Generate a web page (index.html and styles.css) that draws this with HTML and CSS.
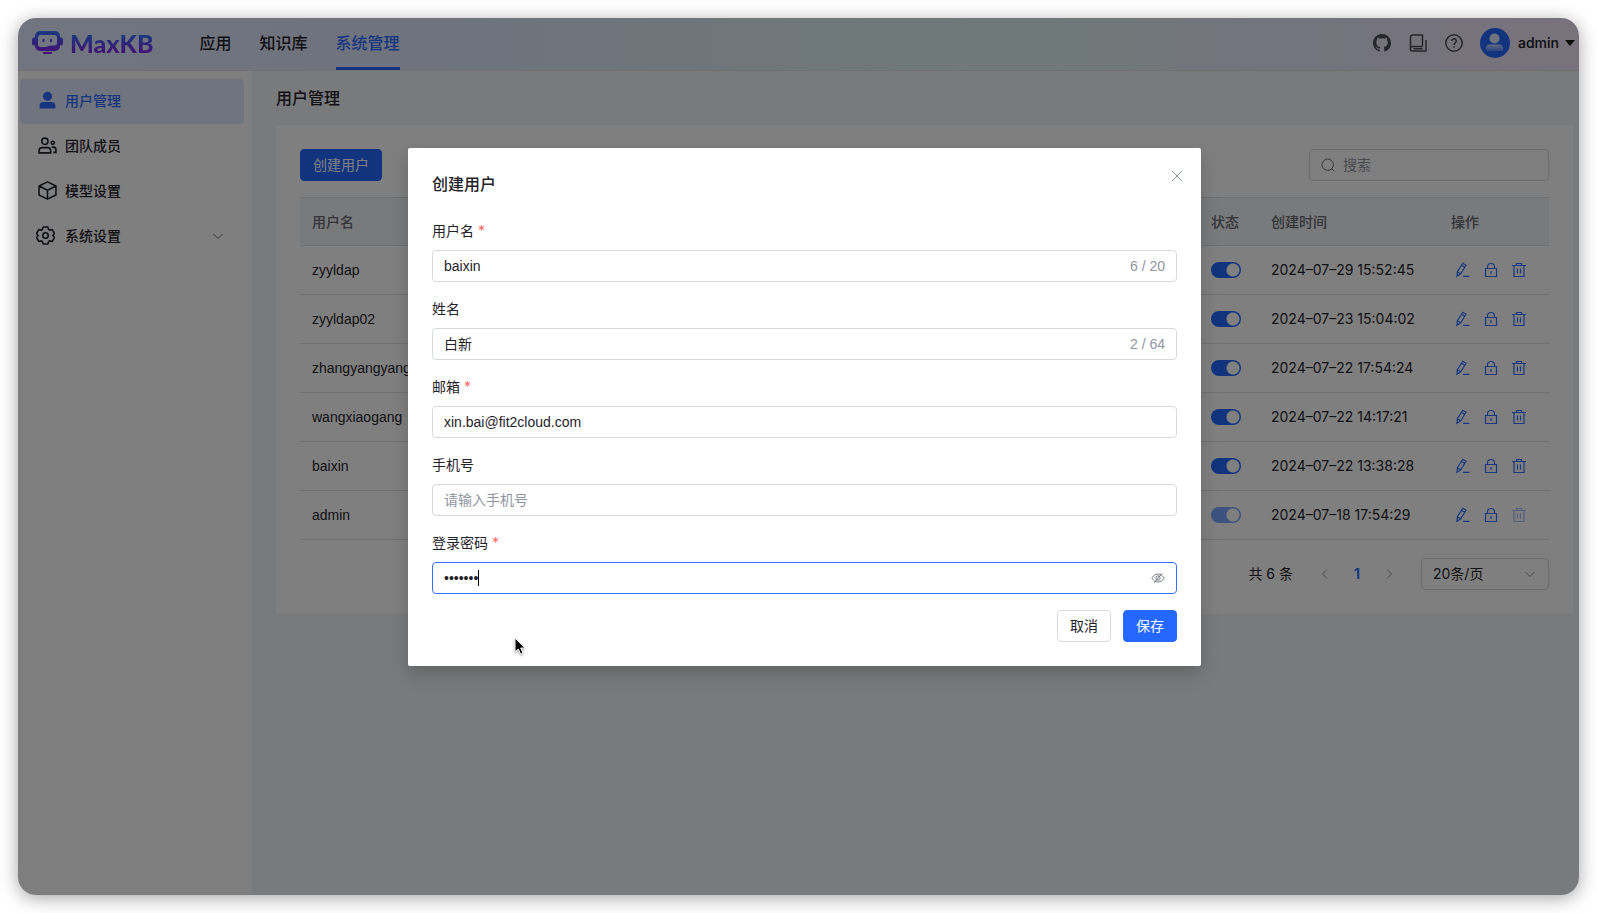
FILE: index.html
```html
<!DOCTYPE html>
<html lang="zh-CN">
<head>
<meta charset="utf-8">
<title>MaxKB</title>
<link rel="stylesheet" href="styles.css">
</head>
<body>
<svg class="sprite" aria-hidden="true">
  <symbol id="edit" viewBox="0 0 16 16"><path d="M2 14.200l.3-4.400L7.800 1.200l3.200 2-5.300 8.500zM6.500 3.300l3.200 2M2.300 9.800l3.300 2M8 14.300h6.500" fill="none" stroke="currentColor" stroke-width="1.200"/></symbol>
  <symbol id="lock" viewBox="0 0 16 16"><path d="M2.500 6.500h11v8h-11zM4.500 6.500V5a3.500 3.500 0 0 1 7 0v1.500M8 9v3" fill="none" stroke="currentColor" stroke-width="1.200"/></symbol>
  <symbol id="trash" viewBox="0 0 16 16"><path d="M1 3.500h14M3 3.500v11h10v-11M5.500 3.500v-2h5v2M6.500 6.500v5M9.500 6.500v5" fill="none" stroke="currentColor" stroke-width="1.200"/></symbol>
  <symbol id="down" viewBox="0 0 12 12"><path d="M1.500 4L6 8.500 10.500 4" fill="none" stroke="currentColor"/></symbol>
</svg>
<div class="window">
  <header class="header">
    <a class="brand" href="#" aria-label="MaxKB">
      <svg class="robot" viewBox="0 0 31 24">
        <defs><linearGradient id="lg" x1="0" y1="0" x2="0" y2="1"><stop offset="0" stop-color="#3370ff"/><stop offset="1" stop-color="#8a1fe8"/></linearGradient></defs>
        <path fill="url(#lg)" fill-rule="evenodd" d="M8 0h15a5 5 0 0 1 5 5v1.500h1a2 2 0 0 1 2 2v4a2 2 0 0 1-2 2h-1V15a5 5 0 0 1-5 5H8a5 5 0 0 1-5-5v-.5H2a2 2 0 0 1-2-2v-4a2 2 0 0 1 2-2h1V5a5 5 0 0 1 5-5zM8.500 4A2.500 2.500 0 0 0 6 6.500v7A2.500 2.500 0 0 0 8.500 16h5l5-1.500h4a2.500 2.500 0 0 0 2.500-2.500V6.500A2.500 2.500 0 0 0 22.500 4zM10.500 8h2v3h-2zM18 8h2v3h-2zM11 21h9v1a1 1 0 0 1-1 1h-7a1 1 0 0 1-1-1z"/>
      </svg>
      <span class="wordmark">MaxKB</span>
    </a>
    <nav class="topnav">
      <a href="#">应用</a><a href="#">知识库</a><a class="active" href="#">系统管理</a>
    </nav>
    <div class="tools">
      <a href="#" aria-label="GitHub"><svg viewBox="0 0 16 16"><path fill="currentColor" d="M8 0C3.580 0 0 3.580 0 8c0 3.540 2.290 6.530 5.470 7.590.4.070.55-.17.55-.38 0-.19-.01-.82-.01-1.490-2.010.37-2.530-.49-2.690-.94-.09-.23-.48-.94-.82-1.130-.28-.15-.68-.52-.01-.53.63-.01 1.080.58 1.230.82.720 1.210 1.870.87 2.330.66.070-.52.280-.87.510-1.070-1.780-.2-3.640-.89-3.640-3.950 0-.87.310-1.590.82-2.150-.08-.2-.36-1.020.08-2.120 0 0 .67-.21 2.200.82a7.600 7.600 0 0 1 4 0c1.530-1.040 2.200-.82 2.200-.82.440 1.100.160 1.920.080 2.120.510.560.820 1.270.820 2.150 0 3.070-1.870 3.750-3.650 3.950.290.250.540.730.540 1.480 0 1.070-.01 1.930-.01 2.200 0 .210.150.460.550.380A8 8 0 0 0 16 8c0-4.420-3.580-8-8-8z"/></svg></a>
      <a href="#" aria-label="文档"><svg viewBox="0 0 18 18" fill="none" stroke="currentColor" stroke-width="1.500"><path d="M13.500 12.500V1H3.500A2 2 0 0 0 1.500 3v12M13.500 12.500H3.500a2.200 2.200 0 0 0 0 4.500H17V6M4.500 14.800h9"/></svg></a>
      <a href="#" aria-label="帮助"><svg viewBox="0 0 18 18" fill="none" stroke="currentColor" stroke-width="1.500"><circle cx="9" cy="9" r="8.200"/><path d="M6.700 7a2.300 2.300 0 1 1 3.600 1.900C9.300 9.600 9 9.900 9 11M9 12.300v1.400"/></svg></a>
    </div>
    <button class="user" type="button">
      <svg class="avatar" viewBox="0 0 30 30"><defs><linearGradient id="ag" x1="0" y1="0" x2="0" y2="1"><stop offset="0" stop-color="#fff" stop-opacity=".75"/><stop offset="1" stop-color="#fff" stop-opacity=".2"/></linearGradient></defs><circle cx="15" cy="15" r="15" fill="#2468ff"/><circle cx="14.500" cy="10.500" r="5" fill="#dfe8ff"/><path d="M6 23V20.500a4 4 0 0 1 4-4h9a4 4 0 0 1 4 4V23z" fill="url(#ag)"/></svg>
      <span>admin</span><i class="caret"></i>
    </button>
  </header>
  <div class="body">
    <aside class="sidebar">
      <a class="item active" href="#"><svg viewBox="0 0 18 18"><circle cx="9" cy="5" r="4.300" fill="currentColor"/><path d="M1.500 16.500V14a3.500 3.500 0 0 1 3.500-3.500h8a3.500 3.500 0 0 1 3.500 3.500v2.500z" fill="currentColor"/></svg><span>用户管理</span></a>
      <a class="item" href="#"><svg viewBox="0 0 18 18" fill="none" stroke="currentColor" stroke-width="1.500"><circle cx="6.500" cy="5" r="3"/><circle cx="14" cy="6.500" r="1.500"/><path d="M1 16v-2a3 3 0 0 1 3-3h5a3 3 0 0 1 3 3v2zM13 10.500h1.500A2.500 2.500 0 0 1 17 13v2.500h-2.500"/></svg><span>团队成员</span></a>
      <a class="item" href="#"><svg viewBox="0 0 18 18" fill="none" stroke="currentColor" stroke-width="1.500" stroke-linejoin="round"><path d="M9 .8l8 4v8.400l-8 4-8-4V4.800zM1 4.800l8 4 8-4M9 8.800v8.400"/></svg><span>模型设置</span></a>
      <a class="item gear" href="#"><svg viewBox="0 0 18 18" fill="none" stroke="currentColor" stroke-width="1.500" stroke-linejoin="round"><path d="M6.800 1h4.400l.8 2.300 1 .6 2.400-.5 2.100 3.700L16 9l1.500 1.900-2.100 3.700-2.400-.5-1 .6-.8 2.300H6.800L6 14.700l-1-.6-2.400.5-2.100-3.700L2 9 .5 7.100l2.100-3.700 2.400.5 1-.6z"/><circle cx="9" cy="9" r="2.600"/></svg><span>系统设置</span><svg class="chev"><use href="#down"/></svg></a>
    </aside>
    <main class="main">
      <h1>用户管理</h1>
      <section class="card">
        <div class="toolbar">
          <button class="btn primary" type="button">创建用户</button>
          <label class="search"><svg viewBox="0 0 14 14" fill="none" stroke="currentColor"><circle cx="6.700" cy="6.700" r="5.700"/><path d="M10.800 10.800l2 2"/></svg><input type="text" placeholder="搜索" aria-label="搜索"></label>
        </div>
        <table class="table">
          <colgroup><col><col class="c-state"><col class="c-time"><col class="c-op"></colgroup>
          <thead><tr><th>用户名</th><th>状态</th><th>创建时间</th><th>操作</th></tr></thead>
          <tbody id="rows"></tbody>
        </table>
        <div class="pager">
          <span>共 6 条</span>
          <div class="pages"><button type="button" aria-label="上一页"><svg class="prev"><use href="#down"/></svg></button><button class="current" type="button">1</button><button type="button" aria-label="下一页"><svg class="next"><use href="#down"/></svg></button></div>
          <div class="size"><select aria-label="每页条数"><option>20条/页</option></select><svg><use href="#down"/></svg></div>
        </div>
      </section>
    </main>
  </div>
  <div class="overlay">
    <form class="dialog" role="dialog" aria-labelledby="dlg-title">
      <button class="close" type="button" aria-label="关闭"><svg viewBox="0 0 12 12"><path d="M1 1l10 10M11 1L1 11" fill="none" stroke="currentColor"/></svg></button>
      <h2 id="dlg-title">创建用户</h2>
      <div class="field"><label for="f1">用户名 <em>*</em></label><div class="box"><input id="f1" type="text" value="baixin"><span class="count">6 / 20</span></div></div>
      <div class="field"><label for="f2">姓名</label><div class="box"><input id="f2" type="text" value="白新"><span class="count">2 / 64</span></div></div>
      <div class="field"><label for="f3">邮箱 <em>*</em></label><div class="box"><input id="f3" type="text" value="xin.bai@fit2cloud.com"></div></div>
      <div class="field"><label for="f4">手机号</label><div class="box"><input id="f4" type="text" placeholder="请输入手机号"></div></div>
      <div class="field"><label for="f5">登录密码 <em>*</em></label><div class="box focus"><div class="pw"><input id="f5" type="password" value="1234567"><i class="ibeam"></i></div><button class="eye" type="button" aria-label="显示密码"><svg viewBox="0 0 16 16" fill="none" stroke="currentColor"><path d="M1 8c1.800-3 4-4.500 7-4.500S13.200 5 15 8c-1.800 3-4 4.500-7 4.500S2.800 11 1 8zM12.800 2.500L3.500 13.500"/><circle cx="8" cy="8" r="2.500"/></svg></button></div></div>
      <div class="actions"><button class="btn" type="button">取消</button><button class="btn primary" type="button">保存</button></div>
      <svg class="pointer" viewBox="0 0 12 18"><path d="M1 1v14l3.300-3 2.400 5.200 2.300-1L6.700 11H11z" fill="#000" stroke="#fff"/></svg>
    </form>
  </div>
</div>
<script src="app.js"></script>
</body>
</html>
```
FILE: styles.css
```css
* { box-sizing: border-box; }
body { margin: 0; height: 100vh; padding: 18px; background: #fff; color: #1f2329; font: 14px/22px Inter, "Noto Sans CJK SC", sans-serif; }
button, input, select { font: inherit; color: inherit; }
a { color: inherit; text-decoration: none; }
svg { display: block; flex: none; }
.sprite { position: absolute; width: 0; height: 0; }
.window { position: relative; height: 100%; border-radius: 18px; box-shadow: 0 3px 18px rgba(0,0,0,.36); overflow: hidden; display: flex; flex-direction: column; background: #f3f4f8; }

.header { display: flex; align-items: center; height: 53px; padding: 0 4px 2px 14px; border-bottom: 1px solid #dee0e3; background: linear-gradient(90deg, #e2ebff 0%, #dde6fc 24%, #def5f0 65%, #e6e9fb 79%, #efe5f8 100%); }
.brand { display: flex; align-items: center; gap: 7px; }
.robot { width: 31px; height: 24px; }
.wordmark { font: 900 25px/28px Lato, sans-serif; background: linear-gradient(#3370ff 20%, #8a1fe8 90%); background-clip: text; color: transparent; }
.topnav { display: flex; align-self: stretch; gap: 28px; margin: 0 0 -2px 46px; font-size: 16px; font-weight: 500; }
.topnav a { display: flex; align-items: center; border-bottom: 3px solid transparent; }
.topnav .active { color: #2f6bff; border-color: #2468ff; }
.tools { display: flex; gap: 18px; margin-left: auto; color: #4a4d57; }
.tools svg { width: 18px; height: 18px; }
.user { display: flex; align-items: center; margin-left: 17px; padding: 0; border: 0; background: none; color: #111; font-weight: 500; }
.avatar { width: 30px; height: 30px; margin-right: 8px; }
.caret { margin-left: 6px; border: 5px solid transparent; border-top: 6px solid #111; border-bottom: 0; }

.body { flex: 1; display: flex; min-height: 0; }
.sidebar { width: 234px; padding: 8px 8px 8px 2px; background: #fff; font-weight: 500; }
.item { display: flex; align-items: center; gap: 8px; height: 45px; padding: 0 20px 2px 18px; border-radius: 4px; }
.item svg { width: 19px; height: 19px; }
.item.gear { padding-left: 16px; gap: 10px; }
.item .chev { width: 12px; height: 12px; margin-left: auto; color: #646a73; }
.item.active { background: #e0e9ff; color: #2f6bff; }
.main { flex: 1; min-width: 0; padding: 15px 6px 0 24px; }
h1, h2 { margin: 0; font-size: 16px; line-height: 24px; font-weight: 500; }
.card { margin-top: 15px; padding: 24px; background: #fff; }
.toolbar { display: flex; justify-content: space-between; margin-bottom: 16px; }
.btn { height: 32px; padding: 0 12px; border: 1px solid #d6d9de; border-radius: 4px; background: #fff; line-height: 22px; }
.btn.primary { border-color: #2468ff; background: #2468ff; color: #fff; }
.search { display: flex; align-items: center; gap: 8px; width: 240px; height: 32px; padding: 0 11px; border: 1px solid #d6d9de; border-radius: 4px; color: #646a73; }
.search svg { width: 14px; height: 14px; }
input { flex: 1; min-width: 0; width: 100%; padding: 0; border: 0; outline: 0; background: none; font-family: "Liberation Sans", "Noto Sans CJK SC", sans-serif; }
input::placeholder { color: #8f959e; opacity: 1; }

.table { width: 100%; table-layout: fixed; border-collapse: collapse; }
.c-state { width: 60px; }
.c-time { width: 180px; }
.c-op { width: 110px; }
.table th { height: 48px; padding: 0 12px; border: solid #dee0e3; border-width: 1px 0; background: #f2f4f8; color: #646a73; font-weight: 500; text-align: left; }
.table td { height: 49px; padding: 0 12px; border-bottom: 1px solid #dee0e3; white-space: nowrap; }
.table .name { font-family: "Liberation Sans", sans-serif; }
.switch { display: block; appearance: none; flex: none; width: 30px; height: 16px; margin: 0; border-radius: 8px; background: radial-gradient(circle at 22px 8px, #fff 6px, transparent 7px) #2468ff; }
.switch:disabled { opacity: .6; }
.ops { display: flex; gap: 12px; padding-left: 4px; }
.ops button { padding: 0; border: 0; background: none; color: #3370ff; }
.ops button:disabled { opacity: .45; }
.ops svg { width: 16px; height: 16px; }
.pager { display: flex; align-items: center; justify-content: flex-end; margin-top: 18px; }
.pages { display: flex; margin: 0 16px; }
.pages button { display: flex; align-items: center; justify-content: center; width: 32px; height: 32px; padding: 0; border: 0; background: none; color: #8f959e; }
.pages .current { color: #3370ff; font-weight: 700; }
.pages svg { width: 12px; height: 12px; }
.prev { transform: rotate(90deg); }
.next { transform: rotate(-90deg); }
.size { display: flex; align-items: center; width: 128px; height: 32px; padding: 0 12px 0 11px; border: 1px solid #d6d9de; border-radius: 4px; color: #8f959e; }
.size select { flex: 1; appearance: none; padding: 0; border: 0; background: none; color: #1f2329; }
.size svg { width: 12px; height: 12px; }

.overlay { position: absolute; inset: 0; padding: 130px 0 0 12px; background: rgba(0,0,0,.5); }
.dialog { position: relative; width: 793px; max-width: 100%; margin: 0 auto; padding: 24px; border-radius: 2px; background: #fff; box-shadow: 0 8px 18px rgba(0,0,0,.18); }
.close { position: absolute; top: 22px; right: 18px; padding: 0; border: 0; background: none; color: #8f959e; }
.close svg { width: 12px; height: 12px; }
h2 { margin-bottom: 24px; }
.field { margin-bottom: 16px; }
.field label { display: block; margin-bottom: 8px; }
em { color: #f76964; font-style: normal; }
.box { display: flex; align-items: center; height: 32px; padding: 0 11px; border: 1px solid #d6d9de; border-radius: 4px; }
.box.focus { border-color: #3370ff; }
.count { color: #8f959e; font-family: "Liberation Sans", sans-serif; }
.pw { position: relative; flex: 1; display: flex; }
.ibeam { position: absolute; left: 34px; top: 3px; width: 1px; height: 16px; background: #000; }
.eye { padding: 0; border: 0; background: none; color: #646a73; }
.eye svg { width: 14px; height: 14px; }
.actions { display: flex; justify-content: flex-end; gap: 12px; }
.pointer { position: absolute; left: 106px; top: 489px; width: 12px; height: 18px; filter: drop-shadow(0 1px 1px rgba(0,0,0,.4)); }
```
FILE: app.js
```js
const users = [
  ["zyyldap", "2024–07–29 15:52:45"],
  ["zyyldap02", "2024–07–23 15:04:02"],
  ["zhangyangyang", "2024–07–22 17:54:24"],
  ["wangxiaogang", "2024–07–22 14:17:21"],
  ["baixin", "2024–07–22 13:38:28"],
  ["admin", "2024–07–18 17:54:29"]
];
const action = (icon, label, off) =>
  `<button type="button" aria-label="${label}" ${off}><svg><use href="#${icon}"/></svg></button>`;
document.getElementById("rows").innerHTML = users.map(([name, time]) => {
  const off = name === "admin" ? "disabled" : "";
  return `<tr><td class="name">${name}</td><td><input class="switch" type="checkbox" checked aria-label="状态 ${name}" ${off}></td><td>${time}</td><td><div class="ops">${action("edit", "编辑", "")}${action("lock", "修改密码", "")}${action("trash", "删除", off)}</div></td></tr>`;
}).join("");
```
